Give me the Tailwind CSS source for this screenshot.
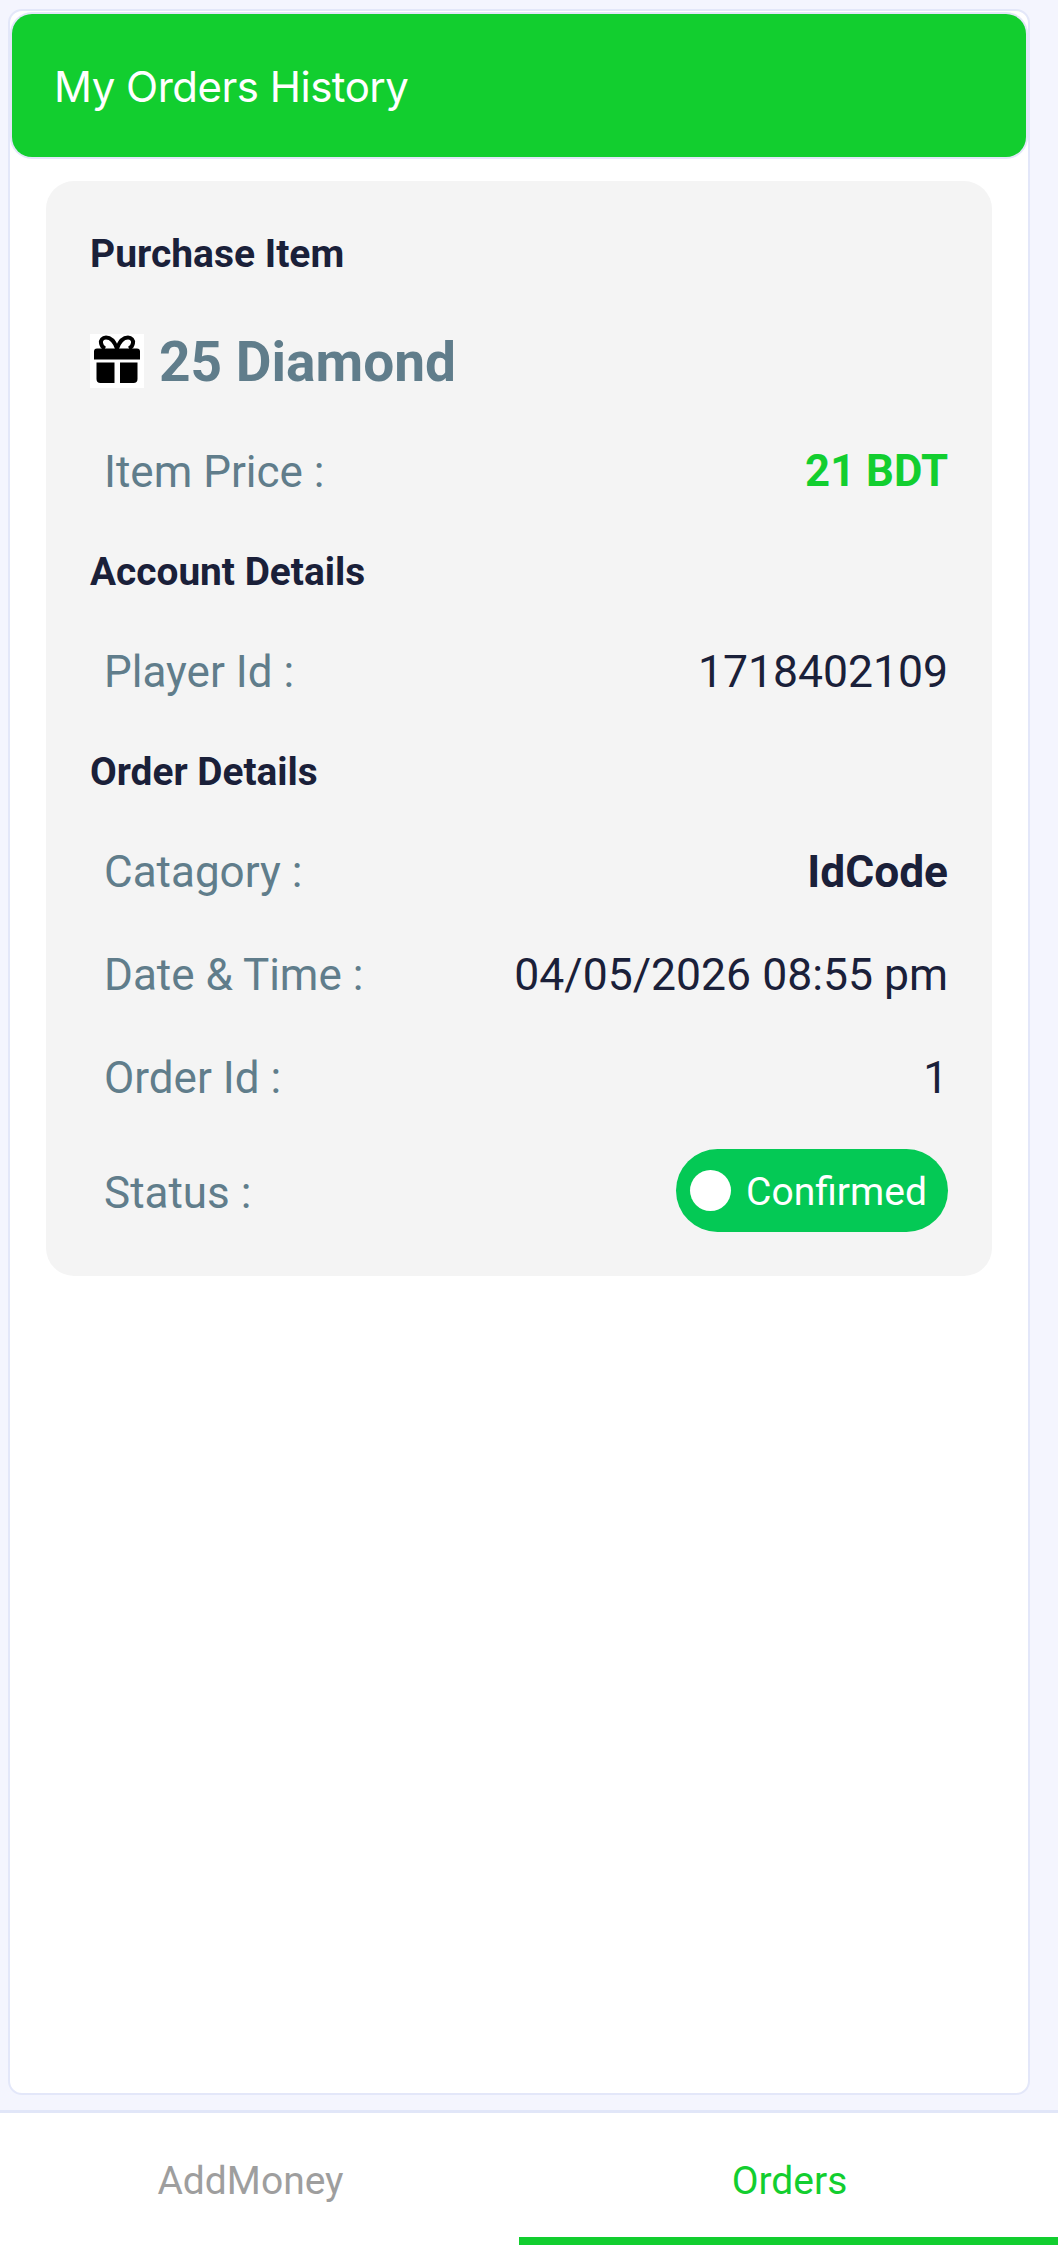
<!DOCTYPE html>
<html>
<head>
<meta charset="utf-8">
<script src="https://cdn.jsdelivr.net/npm/@tailwindcss/browser@4"></script>
</head>
<body class="m-0">
<div class="flex flex-col h-[2245px] w-[1058px] overflow-hidden bg-[#f4f5fe] font-['Roboto',sans-serif]">
  <main class="flex-1 min-h-0 pt-[9px] pl-[8px] pr-[28px] pb-[15px]">
    <div class="h-full rounded-[14px] border-2 border-[#e3e7f9] bg-white pt-[3px] px-[2px]">
      <header class="flex items-center h-[143px] pl-[42px] pt-[2px] rounded-[20px] bg-[#12ce2f] shadow-[0_0_0_2px_#e3e7f9]">
        <h1 class="font-['Inter',sans-serif] text-[42px] tracking-[-0.5px] font-normal text-white">My Orders History</h1>
      </header>
      <section class="mt-[24px] mx-[34px] h-[1095px] rounded-[28px] bg-[#f4f4f4] px-[44px] pt-[47px] text-[#607d8b]">
        <h2 class="flex items-center h-[50px] pt-[2px] text-[39px] font-bold text-[#1a2039]">Purchase Item</h2>
        <div class="flex items-center gap-[15px] h-[54px] mt-[56px]">
          <svg class="w-[54px] h-[54px] bg-white" viewBox="0 0 54 54">
            <path d="M27 14.500C24 6 20 3.500 16 3.500c-3.500 0-5.500 3-5 5.500.3 2.500 2 4.500 4 5.500M27 14.500c3-8.500 7-11 11-11 3.500 0 5.500 3 5 5.500-.3 2.500-2 4.500-4 5.500" fill="none" stroke="#000" stroke-width="4"/>
            <path d="M7 14.500h40a3 3 0 0 1 3 3v8H4v-8a3 3 0 0 1 3-3z" fill="#000"/>
            <path d="M6.500 28.500h18V49h-14a4 4 0 0 1-4-4zM30 28.500h17.500V45a4 4 0 0 1-4 4H30z" fill="#000"/>
          </svg>
          <span class="pt-[2px] text-[55px] leading-none font-bold">25 Diamond</span>
        </div>
        <div class="flex items-center justify-between h-[50px] mt-[58px] pt-[2px] pl-[14px] text-[44px]">
          <span>Item Price :</span><span class="font-bold text-[43.700px] text-[#12ce2f]">21 BDT</span>
        </div>
        <h2 class="flex items-center h-[50px] mt-[50px] pt-[2px] text-[38.800px] font-bold text-[#1a2039]">Account Details</h2>
        <div class="flex items-center justify-between h-[50px] mt-[50px] pt-[2px] pl-[14px] text-[44px]">
          <span>Player Id :</span><span class="text-[44.500px] text-[#1a2039]">1718402109</span>
        </div>
        <h2 class="flex items-center h-[50px] mt-[50px] pt-[2px] text-[38.800px] font-bold text-[#1a2039]">Order Details</h2>
        <div class="flex items-center justify-between h-[50px] mt-[51px] pl-[14px] text-[44px]">
          <span>Catagory :</span><span class="font-bold text-[44.300px] text-[#1a2039]">IdCode</span>
        </div>
        <div class="flex items-center justify-between h-[50px] mt-[53px] pl-[14px] text-[44px]">
          <span>Date &amp; Time :</span><span class="text-[44.500px] text-[#1a2039]">04/05/2026 08:55 pm</span>
        </div>
        <div class="flex items-center justify-between h-[50px] mt-[52px] pt-[2px] pl-[14px] text-[44px]">
          <span>Order Id :</span><span class="text-[#1a2039]">1</span>
        </div>
        <div class="flex items-center justify-between h-[83px] mt-[47px] pl-[14px] text-[44px]">
          <span class="pt-[4px]">Status :</span>
          <span class="flex items-center gap-[15px] w-[272px] h-[83px] pl-[14px] rounded-full bg-[#04c955] text-white text-[39px]">
            <span class="w-[41px] h-[41px] rounded-full bg-white"></span><span class="pt-[4px]">Confirmed</span>
          </span>
        </div>
      </section>
    </div>
  </main>
  <nav class="grid grid-cols-[519px_539px] h-[135px] border-t-[3px] border-[#e1e6f8] bg-white text-[39px]">
    <div class="flex items-center justify-center pt-[4px] pr-[18px] text-[#9e9e9e]">AddMoney</div>
    <div class="flex items-center justify-center pt-[12px] pl-[2px] text-[#12ce2f] border-b-[8px] border-[#12ce2f]">Orders</div>
  </nav>
</div>
</body>
</html>
